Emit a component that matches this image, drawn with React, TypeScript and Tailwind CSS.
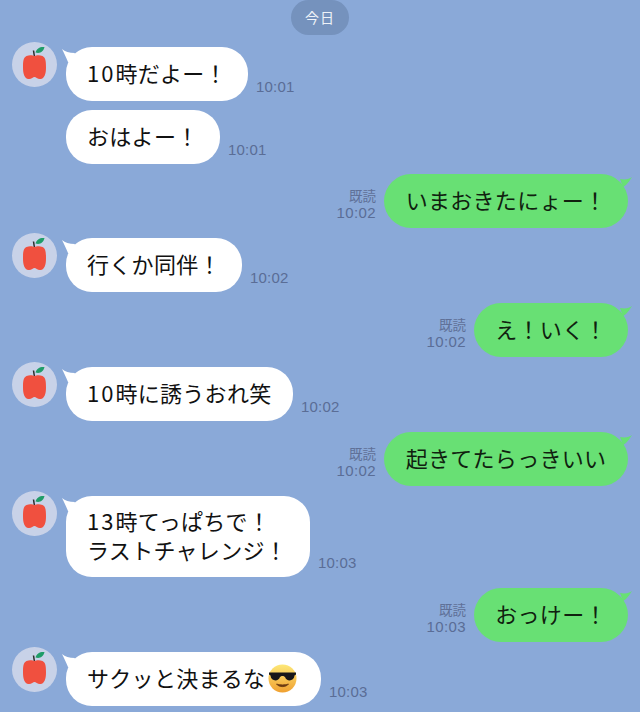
const font = "font-['Noto_Sans_CJK_JP','Noto_Sans_CJK_SC',sans-serif]"

function Avatar() {
  return (
    <div className="w-[45px] h-[45px] rounded-full bg-[#c8d2e8] shrink-0 flex items-center justify-center mt-[-5px]">
      <svg width="45" height="45" viewBox="0 0 45 45">
        <path d="M23.5 10.5 C24.5 6.5 28 4.5 32.5 5 C31.5 9.5 28 12 23.5 10.5 Z" fill="#1f9d68" />
        <path d="M21.5 8.5 L22.5 15" stroke="#2b2b2b" strokeWidth="1.5" fill="none" />
        <path d="M14.5 14 C18 12.5 21 13.5 22.5 14 C24 13.5 27 12.5 30.5 14 C33.5 15.5 34 18.5 34 25.5 C34 32 32.5 36.5 28.5 37 C25.5 37.3 24 35 22.5 35 C21 35 19.5 37.3 16.5 37 C12.5 36.5 11 32 11 25.5 C11 18.5 11.5 15.5 14.5 14 Z" fill="#f0503f" />
      </svg>
    </div>
  )
}

function SunglassesEmoji() {
  return (
    <svg width="29" height="29" viewBox="0 0 29 29" className="inline-block shrink-0 ml-[3px] mt-[3px]">
      <defs>
        <linearGradient id="face" x1="0" y1="0" x2="0" y2="1">
          <stop offset="0" stopColor="#fde878" />
          <stop offset="1" stopColor="#f0a030" />
        </linearGradient>
      </defs>
      <circle cx="14.5" cy="14.5" r="14" fill="url(#face)" />
      <path d="M1 8.5 H28 V10.5 L26.5 11.5 C26 17.5 18.5 18 17 13 C16 11.5 13 11.5 12 13 C10.5 18 3 17.5 2.5 11.5 L1 10.5 Z" fill="#17161a" />
      <path d="M8.5 20 C11 23.5 18 23.5 20.5 20 C18 21.2 11 21.2 8.5 20 Z" fill="#6b3a12" stroke="#6b3a12" strokeWidth="0.8" />
    </svg>
  )
}

// digits in the reference sit wider than the kana around them
function Digits({ children }: { children: string }) {
  return <span className="tracking-[2px]">{children}</span>
}

function Incoming({ lines, time, width, avatar, mt }: { lines: React.ReactNode[]; time: string; width: string; avatar?: boolean; mt: string }) {
  const twoLines = lines.length > 1
  return (
    <div className={`flex items-end pl-3 ${mt}`}>
      <div className="w-[54px] shrink-0 self-start">{avatar && <Avatar />}</div>
      <div className={`relative bg-white rounded-[26px] px-[21px] ${twoLines ? 'pt-[10px] pb-[13px]' : 'pt-[9px] pb-[13px]'} ${width} shrink-0 text-[22px] leading-[29px] text-[#111] tracking-[0.3px] whitespace-nowrap`}>
        {avatar && (
          <svg width="20" height="16" viewBox="0 0 20 16" className="absolute left-[-5px] top-[1px]">
            <path d="M1 1 C4 3.5 8 5 14 5 L10 15 L7 14 C5 9 3 5 1 1 Z" fill="#fff" />
          </svg>
        )}
        {lines.map((l, i) => (
          <div key={i} className={`flex items-center ${twoLines ? 'h-[29px]' : 'h-[32px]'}`}>{l}</div>
        ))}
      </div>
      <span className="ml-2 mb-[4px] text-[15px] leading-[20px] text-[#5a6d96] font-['Liberation_Sans',sans-serif] tracking-[0.2px]">{time}</span>
    </div>
  )
}

function Outgoing({ text, time, width, mt }: { text: string; time: string; width: string; mt: string }) {
  return (
    <div className={`flex items-end justify-end pr-3 ${mt}`}>
      <div className="flex flex-col items-end mr-[8px] mb-[6px]">
        <span className="text-[13.5px] leading-[18px] text-[#5f7097] mt-[-1px]">既読</span>
        <span className="text-[15px] leading-[18px] text-[#5a6d96] font-['Liberation_Sans',sans-serif] tracking-[0.4px]">{time}</span>
      </div>
      <div className={`relative bg-[#68e074] rounded-[27px] h-[54px] pb-[5px] ${width} flex items-center justify-center text-[22px] leading-[32px] text-[#10210f] tracking-[0.3px] whitespace-nowrap`}>
        {text}
        <svg width="18" height="14" viewBox="0 0 18 14" className="absolute right-[-4px] top-[1px]">
          <path d="M18 2 C15 4 12 5 6 4 L9 12 L12 10 C14 8 16 5 18 2 Z" fill="#68e074" />
        </svg>
      </div>
    </div>
  )
}

export default function App() {
  return (
    <div className={`w-[640px] h-[712px] overflow-hidden bg-[#8aa9d8] ${font}`}>
      <div className="flex justify-center">
        <div className="w-[58px] h-[35px] rounded-full bg-[#7592bd] text-[#eef2f8] text-[14px] tracking-[1px] flex items-center justify-center">今日</div>
      </div>

      <Incoming avatar mt="mt-[12px]" width="w-[182px]" time="10:01" lines={[<><Digits>10</Digits>時だよー！</>]} />
      <Incoming mt="mt-[9px]" width="w-[154px]" time="10:01" lines={['おはよー！']} />
      <Outgoing mt="mt-[10px]" width="w-[244px]" time="10:02" text="いまおきたにょー！" />
      <Incoming avatar mt="mt-[10px]" width="w-[176px]" time="10:02" lines={['行くか同伴！']} />
      <Outgoing mt="mt-[11px]" width="w-[154px]" time="10:02" text="え！いく！" />
      <Incoming avatar mt="mt-[10px]" width="w-[227px]" time="10:02" lines={[<><Digits>10</Digits>時に誘うおれ笑</>]} />
      <Outgoing mt="mt-[11px]" width="w-[244px]" time="10:02" text="起きてたらっきいい" />
      <Incoming avatar mt="mt-[10px]" width="w-[244px]" time="10:03" lines={[<><Digits>13</Digits>時てっぱちで！</>, 'ラストチャレンジ！']} />
      <Outgoing mt="mt-[11px]" width="w-[154px]" time="10:03" text="おっけー！" />
      <Incoming
        avatar
        mt="mt-[10px]"
        width="w-[255px]"
        time="10:03"
        lines={[<>サクッと決まるな<SunglassesEmoji /></>]}
      />
    </div>
  )
}
